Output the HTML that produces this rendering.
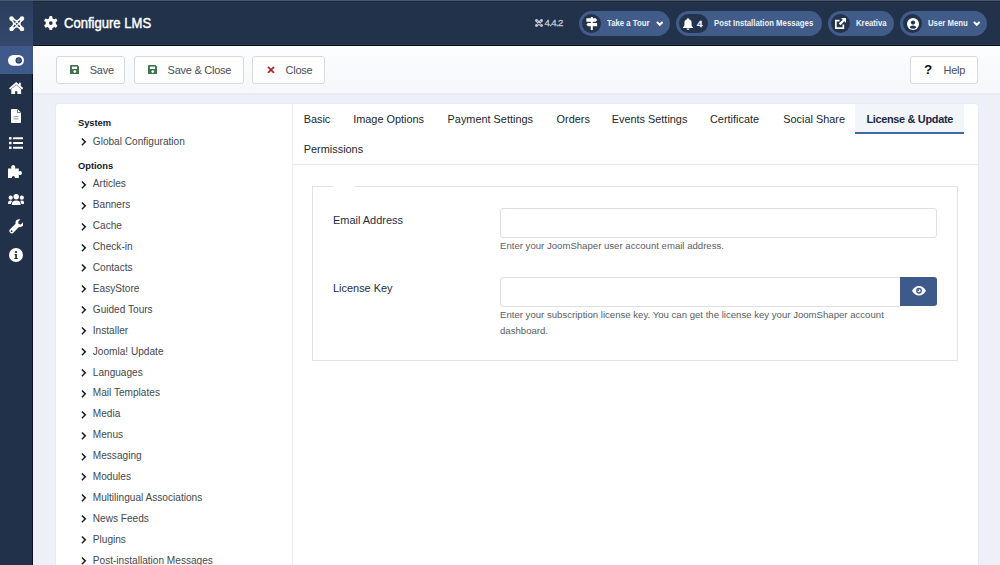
<!DOCTYPE html>
<html><head><meta charset="utf-8">
<style>
*{box-sizing:border-box;margin:0;padding:0}
html,body{width:1000px;height:565px;overflow:hidden;background:#edf0f7;font-family:"Liberation Sans",sans-serif}
.abs{position:absolute}
svg{display:block}
#header{left:0;top:0;width:1000px;height:46px;background:#22324b;border-top:1px solid #4b5567;border-bottom:1px solid #0b101c;box-shadow:inset 0 1px 0 #1b283b,inset 0 -1px 0 #2b3a52}
#logo{left:0;top:0;width:33px;height:46px;background:linear-gradient(#2b3d5c,#33496d);border-top:1px solid #4a566b}
#sidebar{left:0;top:46px;width:33px;height:519px;background:#22314a;border-right:1px solid #0b1122}
#sbactive{left:0;top:46px;width:33px;height:28px;background:#3e598a}
.sbi{position:absolute}
.title{left:64px;top:16.3px;color:#fff;font-size:14.6px;line-height:1;white-space:nowrap;transform-origin:0 0;transform:scaleX(0.895);-webkit-text-stroke:0.45px #fff}
.ver{left:544.4px;top:17.8px;color:#c3c9d4;font-size:9.6px;line-height:1;letter-spacing:-0.6px;-webkit-text-stroke:0.3px #c3c9d4}
.pill{top:11px;height:25px;border-radius:13px;background:#425c8a}
.pill .ic{position:absolute;top:3px;width:19px;height:19px;border-radius:10px;background:#23334e}
.ptx{top:19.4px;color:#eef1f7;font-size:9.2px;font-weight:bold;line-height:1;white-space:nowrap;transform-origin:0 0;transform:scaleX(0.845)}
#toolbar{left:33px;top:46px;width:967px;height:47px;background:linear-gradient(#fdfdfe,#f5f7fa);box-shadow:0 1px 4px rgba(20,30,60,.045)}
.btn{top:55.5px;height:28.5px;background:#fff;border:1px solid #d6dadf;border-radius:3px}
.btx{top:65px;color:#4a4e54;font-size:11px;line-height:1;white-space:nowrap;letter-spacing:-0.25px}
#card{left:56px;top:104px;width:922px;height:470px;background:#fff;border-radius:2px;box-shadow:0 0 1px rgba(40,40,70,.22)}
#divider{left:292px;top:104px;width:1px;height:461px;background:#eaecef}
.tree{left:92.8px;font-size:10.1px;color:#43484e;white-space:nowrap;line-height:1}
.tb{left:78px;font-size:9.4px;font-weight:bold;color:#15191d;letter-spacing:-0.05px}
.chev{position:absolute;left:-12.5px;top:0.4px;width:8px;height:10px}
.tab{font-size:10.9px;color:#23272b;line-height:1;white-space:nowrap}
#activetab{left:855px;top:104px;width:109px;height:30px;background:#f2f5f9;border-bottom:2px solid #3c6aa8}
#tabline{left:293px;top:164px;width:685px;height:1px;background:#e5e7eb}
#fieldset{left:312px;top:186px;width:646px;height:175px;border:1px solid #dfe2e7}
#legendgap{left:333px;top:184px;width:22px;height:4px;background:#fff}
.lbl{left:333px;font-size:10.95px;color:#1f2c45;line-height:1;white-space:nowrap}
.inp{left:500px;height:30px;background:#fff;border:1px solid #dcdfe4;border-radius:3px}
.help{left:500px;font-size:9.6px;color:#595e65;line-height:1;white-space:nowrap}
#eye{left:900px;top:277px;width:37px;height:29px;background:#3e5a8a;border-radius:0 3px 3px 0}
</style></head><body>
<div id="header" class="abs"></div>
<div id="logo" class="abs"></div>
<div id="sidebar" class="abs"></div>
<div id="sbactive" class="abs"></div>
<!-- joomla logo -->
<svg class="abs" style="left:9px;top:15.5px" width="15.5" height="15.5" viewBox="0 0 16 16">
 <g fill="#fff"><circle cx="2.6" cy="2.6" r="2.3"/><circle cx="13.4" cy="2.6" r="2.3"/><circle cx="2.6" cy="13.4" r="2.3"/><circle cx="13.4" cy="13.4" r="2.3"/></g>
 <g stroke="#fff" stroke-width="1.2" fill="none"><path d="M4 1.9L14.1 12M1.9 4L12 14.1M12 1.9L1.9 12M14.1 4L4 14.1"/><path d="M3 3Q8 6.2 13 3Q9.8 8 13 13Q8 9.8 3 13Q6.2 8 3 3Z" stroke-width="1.1"/></g>
</svg>
<!-- sidebar icons -->
<svg class="sbi" style="left:8.4px;top:55px" width="16" height="10.8" viewBox="0 0 16 10.8"><rect x="0" y="0" width="16" height="10.8" rx="5.4" fill="#fff"/><circle cx="10.7" cy="5.4" r="2.6" fill="#4a6595" stroke="#22365c" stroke-width="1.1"/></svg>
<svg class="sbi" style="left:8.8px;top:81.5px" width="14.4" height="12.5" viewBox="0 0 14.4 12.5"><path d="M7.2 0L0 6.2L1.3 7.6L7.2 2.6L13.1 7.6L14.4 6.2L11.8 4V0.8H10V2.5Z" fill="#fff"/><path d="M2.3 7.1L7.2 3L12.1 7.1V12.5H8.3V9.3H6.1V12.5H2.3Z" fill="#fff"/></svg>
<svg class="sbi" style="left:10.8px;top:109.1px" width="10" height="14" viewBox="0 0 10 14"><path d="M0 0.8Q0 0 0.8 0H6.4L10 3.6V13.2Q10 14 9.2 14H0.8Q0 14 0 13.2Z" fill="#fff"/><path d="M6.4 0.3V3.6H9.7" fill="none" stroke="#22314a" stroke-width="0.7"/><path d="M2.6 7.6H7.4M2.6 9.8H7.4" stroke="#a3aab5" stroke-width="1.3"/></svg>
<svg class="sbi" style="left:8.8px;top:137.4px" width="14.5" height="12" viewBox="0 0 14.5 12"><g fill="#fff"><rect x="0" y="0" width="2.6" height="2.6" rx=".4"/><rect x="0" y="4.7" width="2.6" height="2.6" rx=".4"/><rect x="0" y="9.4" width="2.6" height="2.6" rx=".4"/><rect x="4" y="0.3" width="10.5" height="2" rx=".4"/><rect x="4" y="5" width="10.5" height="2" rx=".4"/><rect x="4" y="9.7" width="10.5" height="2" rx=".4"/></g></svg>
<svg class="sbi" style="left:8.2px;top:164.7px" width="15.5" height="13.5" viewBox="0 0 15.5 13.5"><path d="M0 3.4H3.6Q3 2.6 3.2 1.7Q3.6 0 5.2 0Q6.8 0 7.2 1.7Q7.4 2.6 6.8 3.4H10.8V6.6Q11.6 6 12.5 6.1Q14 6.4 14 8Q14 9.6 12.5 9.9Q11.6 10 10.8 9.4V13.5H6.8Q7.1 12.7 6.8 11.9Q6.4 10.9 5.4 10.9Q4.4 10.9 4 11.9Q3.7 12.7 4 13.5H0Z" fill="#fff"/></svg>
<svg class="sbi" style="left:7.8px;top:193.5px" width="16.5" height="11.8" viewBox="0 0 16.5 11.8"><g fill="#fff"><circle cx="8.25" cy="2.7" r="2.7"/><circle cx="2.7" cy="3.7" r="2.1"/><circle cx="13.8" cy="3.7" r="2.1"/><path d="M3.9 11.8V10Q3.9 6.4 8.25 6.4Q12.6 6.4 12.6 10V11.8Z"/><path d="M0 9.9Q0 6.6 2.7 6.6Q3.6 6.6 4.3 7Q3.1 8 3.1 10H0Z"/><path d="M16.5 9.9Q16.5 6.6 13.8 6.6Q12.9 6.6 12.2 7Q13.4 8 13.4 10H16.5Z"/></g></svg>
<svg class="sbi" style="left:8.7px;top:219.3px" width="14.5" height="15" viewBox="0 0 14.5 15"><path d="M14 3.2L11.8 5.4L9.6 5L9.2 2.8L11.4 0.6Q9.4 -0.3 7.6 1.1Q6 2.6 6.6 4.8L0.8 10.6Q-0.2 11.8 0.7 13.1L1.6 14Q2.9 14.9 4.1 13.9L9.9 8.1Q12.1 8.7 13.5 7.1Q14.9 5.3 14 3.2Z" fill="#fff"/><circle cx="2.6" cy="12.2" r="0.9" fill="#22314a"/></svg>
<svg class="sbi" style="left:8.9px;top:247.8px" width="14" height="14" viewBox="0 0 14 14"><circle cx="7" cy="7" r="7" fill="#fff"/><circle cx="7" cy="4.1" r="1.1" fill="#22314a"/><path d="M5.6 6.1H7.9V9.9H8.7V11H5.4V9.9H6.2V7.2H5.6Z" fill="#22314a"/></svg>

<!-- gear -->
<svg class="abs" style="left:44.4px;top:15.9px" width="13.6" height="14.2" viewBox="-7 -7.3 14 14.6">
 <g fill="#fff"><circle r="5.3"/>
 <rect x="-1.6" y="-7.2" width="3.2" height="3.4" rx="1"/><rect x="-1.6" y="3.8" width="3.2" height="3.4" rx="1"/>
 <rect x="-1.6" y="-7.2" width="3.2" height="3.4" rx="1" transform="rotate(60)"/><rect x="-1.6" y="-7.2" width="3.2" height="3.4" rx="1" transform="rotate(120)"/>
 <rect x="-1.6" y="-7.2" width="3.2" height="3.4" rx="1" transform="rotate(240)"/><rect x="-1.6" y="-7.2" width="3.2" height="3.4" rx="1" transform="rotate(300)"/></g>
 <circle r="1.9" fill="#22324b"/>
</svg>
<div class="abs title">Configure LMS</div>
<!-- version -->
<svg class="abs" style="left:534.6px;top:18.8px" width="8" height="8" viewBox="0 0 16 16">
 <g fill="#c3c9d4"><circle cx="2.8" cy="2.8" r="2.6"/><circle cx="13.2" cy="2.8" r="2.6"/><circle cx="2.8" cy="13.2" r="2.6"/><circle cx="13.2" cy="13.2" r="2.6"/></g>
 <g stroke="#c3c9d4" stroke-width="2.2" fill="none"><path d="M4.1 1.9L14.1 11.9M1.9 4.1L11.9 14.1M11.9 1.9L1.9 11.9M14.1 4.1L4.1 14.1"/></g>
</svg>
<div class="abs ver">4.4.2</div>

<!-- pills -->
<div class="abs pill" style="left:579.3px;width:91px"><span class="ic" style="left:3.2px"></span></div>
<svg class="abs" style="left:586.2px;top:17px" width="11.5" height="13" viewBox="0 0 11.5 13"><g fill="#fff"><rect x="4.8" y="0" width="2" height="13"/><path d="M0.4 1.3H9.6L11.2 3L9.6 4.7H0.4Z"/><path d="M11.1 5.9H1.9L0.3 7.6L1.9 9.3H11.1Z"/></g></svg>
<div class="abs ptx" style="left:607.2px">Take a Tour</div>
<svg class="abs" style="left:655.8px;top:20.6px" width="7.5" height="5" viewBox="0 0 7.5 5"><path d="M0.9 0.9L3.75 3.8L6.6 0.9" fill="none" stroke="#fff" stroke-width="2"/></svg>

<div class="abs pill" style="left:675.6px;width:146.4px"><span class="ic" style="left:3.2px;width:29px"></span></div>
<svg class="abs" style="left:682.5px;top:17.6px" width="10" height="12" viewBox="0 0 10 12"><path d="M5 0Q5.8 0 5.8 0.8V1.3Q8.6 1.9 8.6 5V7.6L10 9.4V10H0V9.4L1.4 7.6V5Q1.4 1.9 4.2 1.3V0.8Q4.2 0 5 0Z" fill="#fff"/><path d="M3.6 10.6H6.4Q6.4 12 5 12Q3.6 12 3.6 10.6Z" fill="#fff"/></svg>
<div class="abs ptx" style="left:697px;top:18.6px;font-size:9.8px;transform:none;-webkit-text-stroke:0.3px #eef1f7">4</div>
<div class="abs ptx" style="left:714px">Post Installation Messages</div>

<div class="abs pill" style="left:827.6px;width:66.6px"><span class="ic" style="left:3.2px"></span></div>
<svg class="abs" style="left:835px;top:18.2px" width="11" height="11" viewBox="0 0 11 11"><g fill="#fff"><path d="M6 0H11V5L9.3 3.3L5.4 7.2L3.8 5.6L7.7 1.7Z"/><path d="M0 1.8H4.6V3.5H1.7V9.3H7.5V6.4H9.2V11H0Z"/></g></svg>
<div class="abs ptx" style="left:855.6px">Kreativa</div>

<div class="abs pill" style="left:900px;width:87px"><span class="ic" style="left:3.2px"></span></div>
<svg class="abs" style="left:906.5px;top:17.5px" width="12" height="12" viewBox="0 0 12 12"><circle cx="6" cy="6" r="6" fill="#fff"/><circle cx="6" cy="4.6" r="2.1" fill="#23334e"/><path d="M2.6 9.6Q3.4 7.4 6 7.4Q8.6 7.4 9.4 9.6Q8 10.8 6 10.8Q4 10.8 2.6 9.6Z" fill="#23334e"/></svg>
<div class="abs ptx" style="left:927.6px">User Menu</div>
<svg class="abs" style="left:972.6px;top:20.6px" width="7.5" height="5" viewBox="0 0 7.5 5"><path d="M0.9 0.9L3.75 3.8L6.6 0.9" fill="none" stroke="#fff" stroke-width="2"/></svg>

<!-- toolbar -->
<div id="toolbar" class="abs"></div>
<div class="abs btn" style="left:55.6px;width:69.4px"></div>
<svg class="abs" style="left:69.5px;top:64.6px" width="9.6" height="9.6" viewBox="0 0 10 10"><path d="M0 1Q0 0 1 0H7.8L10 2.2V9Q10 10 9 10H1Q0 10 0 9Z" fill="#3f7349"/><rect x="2" y="1.7" width="5.4" height="2.5" fill="#fff"/><circle cx="5" cy="6.9" r="1.4" fill="#fff"/></svg>
<div class="abs btx" style="left:89.7px">Save</div>
<div class="abs btn" style="left:133.5px;width:110px"></div>
<svg class="abs" style="left:147.6px;top:64.6px" width="9.6" height="9.6" viewBox="0 0 10 10"><path d="M0 1Q0 0 1 0H7.8L10 2.2V9Q10 10 9 10H1Q0 10 0 9Z" fill="#3f7349"/><rect x="2" y="1.7" width="5.4" height="2.5" fill="#fff"/><circle cx="5" cy="6.9" r="1.4" fill="#fff"/></svg>
<div class="abs btx" style="left:167.6px">Save &amp; Close</div>
<div class="abs btn" style="left:252px;width:73px"></div>
<svg class="abs" style="left:266.6px;top:65.6px" width="8" height="7.8" viewBox="0 0 8 8"><path d="M0.9 0.9L7.1 7.1M7.1 0.9L0.9 7.1" stroke="#ad2628" stroke-width="1.75"/></svg>
<div class="abs btx" style="left:285.6px">Close</div>
<div class="abs btn" style="left:909.5px;width:68px"></div>
<div class="abs" style="left:924px;top:63px;font-size:13.5px;font-weight:bold;color:#111;line-height:1">?</div>
<div class="abs btx" style="left:943.5px">Help</div>
<div id="card" class="abs"></div>
<div id="divider" class="abs"></div>
<div id="activetab" class="abs"></div>
<div class="abs tab" style="left:303.7px;top:114.3px">Basic</div>
<div class="abs tab" style="left:353.2px;top:114.3px">Image Options</div>
<div class="abs tab" style="left:447.6px;top:114.3px">Payment Settings</div>
<div class="abs tab" style="left:556.6px;top:114.3px">Orders</div>
<div class="abs tab" style="left:611.7px;top:114.3px">Events Settings</div>
<div class="abs tab" style="left:710px;top:114.3px">Certificate</div>
<div class="abs tab" style="left:783.3px;top:114.3px">Social Share</div>
<div class="abs tab" style="left:866.4px;top:114.3px;font-weight:bold;color:#1c2842;letter-spacing:-0.3px">License &amp; Update</div>
<div class="abs tab" style="left:303.8px;top:143.8px">Permissions</div>
<div id="tabline" class="abs"></div>
<div id="fieldset" class="abs"></div>
<div id="legendgap" class="abs"></div>
<div class="abs lbl" style="top:214.7px">Email Address</div>
<div class="abs inp" style="top:208.4px;width:437px"></div>
<div class="abs help" style="top:241.4px">Enter your JoomShaper user account email address.</div>
<div class="abs lbl" style="top:282.8px">License Key</div>
<div class="abs inp" style="top:276.6px;width:401px;border-radius:3px 0 0 3px"></div>
<div id="eye" class="abs"></div>
<svg class="abs" style="left:911.7px;top:286.3px" width="14" height="9.5" viewBox="0 0 14 9.5"><path d="M7 0Q11.4 0 14 4.75Q11.4 9.5 7 9.5Q2.6 9.5 0 4.75Q2.6 0 7 0Z" fill="#fff"/><circle cx="7" cy="4.75" r="2.9" fill="#3e5a8a"/><circle cx="7" cy="4.75" r="1.6" fill="#fff"/><circle cx="6.3" cy="4.1" r="0.9" fill="#3e5a8a"/></svg>
<div class="abs help" style="top:309.8px">Enter your subscription license key. You can get the license key your JoomShaper account</div>
<div class="abs help" style="top:326.4px">dashboard.</div>
<div class="abs tree tb" style="top:118.44px">System</div>
<div class="abs tree ti" style="top:136.75px"><svg class="chev" viewBox="0 0 8 10"><path d="M1.9 1.5L5.3 4.85L1.9 8.2" fill="none" stroke="#1b1f23" stroke-width="1.5"/></svg>Global Configuration</div>
<div class="abs tree tb" style="top:161.44px">Options</div>
<div class="abs tree ti" style="top:179.45px"><svg class="chev" viewBox="0 0 8 10"><path d="M1.9 1.5L5.3 4.85L1.9 8.2" fill="none" stroke="#1b1f23" stroke-width="1.5"/></svg>Articles</div>
<div class="abs tree ti" style="top:200.35px"><svg class="chev" viewBox="0 0 8 10"><path d="M1.9 1.5L5.3 4.85L1.9 8.2" fill="none" stroke="#1b1f23" stroke-width="1.5"/></svg>Banners</div>
<div class="abs tree ti" style="top:221.25px"><svg class="chev" viewBox="0 0 8 10"><path d="M1.9 1.5L5.3 4.85L1.9 8.2" fill="none" stroke="#1b1f23" stroke-width="1.5"/></svg>Cache</div>
<div class="abs tree ti" style="top:242.15px"><svg class="chev" viewBox="0 0 8 10"><path d="M1.9 1.5L5.3 4.85L1.9 8.2" fill="none" stroke="#1b1f23" stroke-width="1.5"/></svg>Check-in</div>
<div class="abs tree ti" style="top:263.05px"><svg class="chev" viewBox="0 0 8 10"><path d="M1.9 1.5L5.3 4.85L1.9 8.2" fill="none" stroke="#1b1f23" stroke-width="1.5"/></svg>Contacts</div>
<div class="abs tree ti" style="top:283.95px"><svg class="chev" viewBox="0 0 8 10"><path d="M1.9 1.5L5.3 4.85L1.9 8.2" fill="none" stroke="#1b1f23" stroke-width="1.5"/></svg>EasyStore</div>
<div class="abs tree ti" style="top:304.85px"><svg class="chev" viewBox="0 0 8 10"><path d="M1.9 1.5L5.3 4.85L1.9 8.2" fill="none" stroke="#1b1f23" stroke-width="1.5"/></svg>Guided Tours</div>
<div class="abs tree ti" style="top:325.75px"><svg class="chev" viewBox="0 0 8 10"><path d="M1.9 1.5L5.3 4.85L1.9 8.2" fill="none" stroke="#1b1f23" stroke-width="1.5"/></svg>Installer</div>
<div class="abs tree ti" style="top:346.65px"><svg class="chev" viewBox="0 0 8 10"><path d="M1.9 1.5L5.3 4.85L1.9 8.2" fill="none" stroke="#1b1f23" stroke-width="1.5"/></svg>Joomla! Update</div>
<div class="abs tree ti" style="top:367.55px"><svg class="chev" viewBox="0 0 8 10"><path d="M1.9 1.5L5.3 4.85L1.9 8.2" fill="none" stroke="#1b1f23" stroke-width="1.5"/></svg>Languages</div>
<div class="abs tree ti" style="top:388.45px"><svg class="chev" viewBox="0 0 8 10"><path d="M1.9 1.5L5.3 4.85L1.9 8.2" fill="none" stroke="#1b1f23" stroke-width="1.5"/></svg>Mail Templates</div>
<div class="abs tree ti" style="top:409.35px"><svg class="chev" viewBox="0 0 8 10"><path d="M1.9 1.5L5.3 4.85L1.9 8.2" fill="none" stroke="#1b1f23" stroke-width="1.5"/></svg>Media</div>
<div class="abs tree ti" style="top:430.25px"><svg class="chev" viewBox="0 0 8 10"><path d="M1.9 1.5L5.3 4.85L1.9 8.2" fill="none" stroke="#1b1f23" stroke-width="1.5"/></svg>Menus</div>
<div class="abs tree ti" style="top:451.15px"><svg class="chev" viewBox="0 0 8 10"><path d="M1.9 1.5L5.3 4.85L1.9 8.2" fill="none" stroke="#1b1f23" stroke-width="1.5"/></svg>Messaging</div>
<div class="abs tree ti" style="top:472.05px"><svg class="chev" viewBox="0 0 8 10"><path d="M1.9 1.5L5.3 4.85L1.9 8.2" fill="none" stroke="#1b1f23" stroke-width="1.5"/></svg>Modules</div>
<div class="abs tree ti" style="top:492.95px"><svg class="chev" viewBox="0 0 8 10"><path d="M1.9 1.5L5.3 4.85L1.9 8.2" fill="none" stroke="#1b1f23" stroke-width="1.5"/></svg>Multilingual Associations</div>
<div class="abs tree ti" style="top:513.85px"><svg class="chev" viewBox="0 0 8 10"><path d="M1.9 1.5L5.3 4.85L1.9 8.2" fill="none" stroke="#1b1f23" stroke-width="1.5"/></svg>News Feeds</div>
<div class="abs tree ti" style="top:534.75px"><svg class="chev" viewBox="0 0 8 10"><path d="M1.9 1.5L5.3 4.85L1.9 8.2" fill="none" stroke="#1b1f23" stroke-width="1.5"/></svg>Plugins</div>
<div class="abs tree ti" style="top:555.65px"><svg class="chev" viewBox="0 0 8 10"><path d="M1.9 1.5L5.3 4.85L1.9 8.2" fill="none" stroke="#1b1f23" stroke-width="1.5"/></svg>Post-installation Messages</div></body></html>
